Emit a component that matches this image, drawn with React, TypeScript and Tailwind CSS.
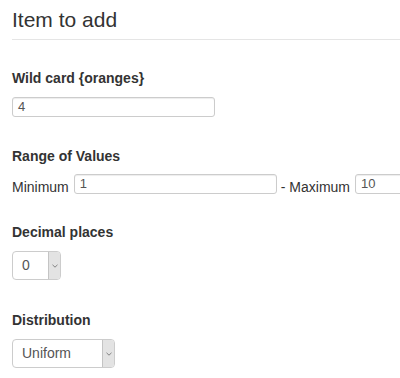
import React from 'react';

function TextBox({ value, width }: { value: string; width: string }) {
  return (
    <div
      className={`${width} h-[20px] shrink-0 rounded-[3px] border border-[#cccccc] bg-white pl-[5px] text-[13px] leading-[18px] text-[#555555] shadow-[inset_0_1px_1px_rgba(0,0,0,0.075)]`}
    >
      {value}
    </div>
  );
}

function SelectBox({ value, width }: { value: string; width: string }) {
  return (
    <div
      className={`${width} h-[29px] flex overflow-hidden rounded-[4px] border border-[#cccccc] bg-white text-[14px] text-[#555555]`}
    >
      <div className="flex-1 flex items-center pl-[9px]">{value}</div>
      <div className="w-[12px] flex items-center justify-center border-l border-[#c4c4c4] bg-[#e3e3e3]">
        <svg width="6" height="4" viewBox="0 0 6 4">
          <path d="M0.5 0.8 L3 3.2 L5.5 0.8" fill="none" stroke="#777" strokeWidth="0.9" />
        </svg>
      </div>
    </div>
  );
}

export default function App() {
  return (
    <div className="min-h-[378px] overflow-hidden bg-white pl-3 font-['Liberation_Sans',Arial,sans-serif] text-[#333333]">
      <h2 className="pt-2 pb-2 text-[21px] leading-[23px] font-normal border-b border-[#e5e5e5]">Item to add</h2>

      {/* wild card */}
      <div className="mt-[28px] text-[14px] leading-[20px] font-bold">Wild card {'{oranges}'}</div>
      <div className="mt-[9px]">
        <TextBox value="4" width="w-[203px]" />
      </div>

      {/* range */}
      <div className="mt-[29px] text-[14px] leading-[20px] font-bold">Range of Values</div>
      <div className="mt-2 h-[20px] flex items-start whitespace-nowrap text-[14px] leading-[20px]">
        <span className="mt-[3px] mr-[5px]">Minimum</span>
        <TextBox value="1" width="w-[203px]" />
        <span className="mt-[3px] ml-[4px] mr-[5px]">- Maximum</span>
        <TextBox value="10" width="w-[203px]" />
      </div>

      {/* decimals */}
      <div className="mt-[28px] text-[14px] leading-[20px] font-bold">Decimal places</div>
      <div className="mt-[9px]">
        <SelectBox value="0" width="w-[49px]" />
      </div>

      {/* distribution */}
      <div className="mt-[30px] text-[14px] leading-[20px] font-bold">Distribution</div>
      <div className="mt-[9px]">
        <SelectBox value="Uniform" width="w-[103px]" />
      </div>
    </div>
  );
}
